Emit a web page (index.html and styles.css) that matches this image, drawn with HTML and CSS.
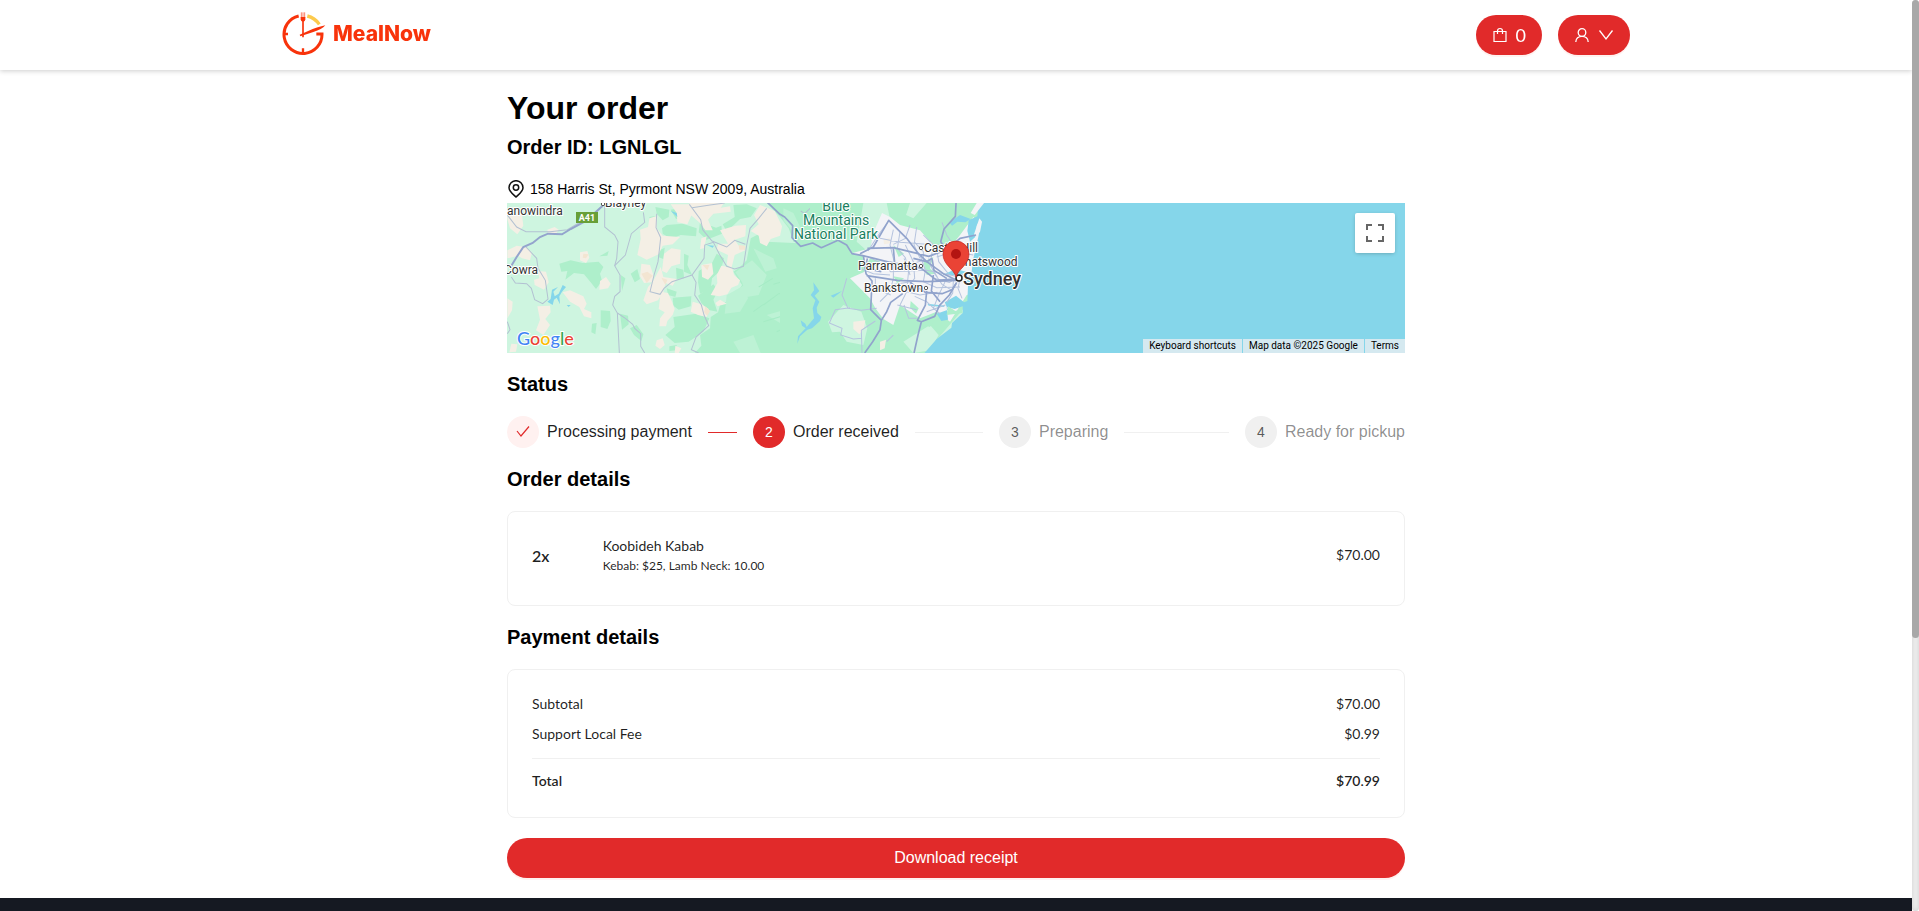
FILE: index.html
```html
<!DOCTYPE html>
<html lang="en">

	<head>
		<title>MealNow - Your order</title>
		<meta charset="utf-8">
		<meta name="viewport" content="width=device-width, initial-scale=1">
		<link rel="stylesheet" href="styles.css">
	</head>

	<body>
		<div class="page">
			<header class="header">
				<div class="header-inner">
					<a class="logo" href="#">
						<svg width="44" height="44" viewBox="0 0 132 132" fill="none" aria-hidden="true">
							<path d="M50 12A57 57 0 1 0 120 66H103" stroke="#f8330b" stroke-width="9"/>
							<path d="M76 12Q98 17 112 37" stroke="#fcca4d" stroke-width="10"/>
							<path d="M5 66H18M63 126V109" stroke="#f8330b" stroke-width="7"/>
							<path d="M58 1V18M63 1V18M68 1V18" stroke="#fb8068" stroke-width="3"/>
							<path d="M56 15H70V22Q70 29 63 29Q56 29 56 22Z" fill="#f8330b"/>
							<path d="M63 25V76" stroke="#f8330b" stroke-width="5"/>
							<path d="M53 68L92 51Q120 42 130 40Q120 52 94 60L55 73Z" fill="#f8330b"/>
						</svg>
						<span>MealNow</span>
					</a>
					<div class="actions">
						<button class="btn btn-cart" type="button" aria-label="Cart, 0 items">
							<svg width="16" height="16" viewBox="0 0 16 16" fill="none" stroke="#fff" stroke-width="1.200" aria-hidden="true">
								<path d="M2 4.500H14V14.500H2ZM5.500 7V4Q5.500 1.500 8 1.500T10.500 4V7"/>
							</svg>
							<span>0</span>
						</button>
						<button class="btn btn-user" type="button" aria-label="Account">
							<svg width="16" height="16" viewBox="0 0 16 16" fill="none" stroke="#fff" stroke-width="1.300" aria-hidden="true">
								<circle cx="8" cy="5.500" r="3.800"/>
								<path d="M1.800 15C1.800 11.500 4.500 9.300 8 9.300S14.200 11.500 14.200 15"/>
							</svg>
							<svg width="16" height="16" viewBox="0 0 16 16" fill="none" stroke="#fff" stroke-width="1.300" aria-hidden="true">
								<path d="M1.500 3.500L8 12L14.500 3.500"/>
							</svg>
						</button>
					</div>
				</div>
			</header>

			<main class="order">
				<h1>Your order</h1>
				<h2 class="order-id">Order ID: LGNLGL</h2>

				<div class="address">
					<svg width="18" height="18" viewBox="0 0 18 18" fill="none" stroke="#111" stroke-width="1.500" aria-hidden="true">
						<path d="M9 17C6.500 14.500 2 11.500 2 7.700A7 7 0 0 1 16 7.700C16 11.500 11.500 14.500 9 17Z"/>
						<circle cx="9" cy="7.500" r="2.700"/>
					</svg>
					<span>158 Harris St, Pyrmont NSW 2009, Australia</span>
				</div>

				<div class="map">
					<svg class="map-canvas" viewBox="0 0 898 150" preserveAspectRatio="xMidYMid slice" role="img" aria-label="Map of Sydney">
						<rect width="898" height="150" fill="#cef5e0"/>
						<!-- countryside, west -->
						<g transform="translate(-7 -8) scale(.3334)">
							<g fill="#aeefcb">
								<path d="M178 206L212 196L248 204L296 200L310 216L300 236L306 258L288 282L272 262L252 238L222 234L196 254L202 228L184 230Z"/>
								<path d="M302 346L330 348L332 378L322 402L302 396ZM360 356L384 362L386 388L366 404ZM276 386L290 384L286 418L274 412ZM298 184L326 168L322 182ZM362 240L376 250L366 288Z"/>
								<path d="M390 400L410 390L430 418L424 438L402 420ZM466 36L508 44L506 66L488 76L470 56ZM512 44L546 38L556 66L528 72ZM448 66L470 62L466 98L452 102Z"/>
								<path d="M500 90L548 86L590 100L588 124L542 120L514 132L488 116L486 100ZM600 80L648 98L664 92L666 116L620 134L596 112ZM474 168L494 158L490 192L474 186Z"/>
								<path d="M392 236L412 222L420 252L404 262ZM500 280L530 290L526 306L504 300ZM518 308L574 304L572 334L536 344L520 332ZM552 176L566 182L562 210L576 240L552 230ZM528 218L550 224L552 250L530 252Z"/>
								<path d="M520 366L588 356L628 370L610 410L566 440L524 444L496 420L524 396ZM596 228L636 204L650 176L672 190L662 226L636 250L632 282L600 296L594 262Z"/>
								<path d="M594 302L640 268L654 286L640 314L652 350L622 344L604 324ZM700 30L740 28L770 40L752 66L720 72L680 110L668 88L704 66ZM700 230L720 216L740 196L752 130L782 114L800 140L930 146V474H584L604 452L600 420L630 400L632 366L654 352L660 330L684 318L706 300L726 270Z"/>
								<path d="M800 24H930V150L880 140L866 100L840 66ZM508 454L530 450L528 466L508 468Z"/>
							</g>
							<g fill="#bdf2d5">
								<path d="M680 300L730 272L744 310L720 350L674 356ZM706 232L756 196L800 240L776 300L740 306L726 262ZM850 40L880 54L902 100L884 116L850 76ZM760 160L820 190L830 220L796 230ZM700 440L760 420L782 474H720ZM800 360L870 340L890 360L850 390Z"/>
							</g>
							<g stroke="#a5ebc5" stroke-width="3" fill="none">
								<path d="M790 330L836 296L880 290M820 268L884 250M856 226L900 214L924 190M790 380L850 362M830 410L880 386M760 350L790 328M880 330L926 310M776 276L818 250"/>
							</g>
							<g fill="#f4efe5">
								<path d="M22 42L42 36L66 60L70 92L52 118L30 100L22 72ZM22 166L50 152L76 156L96 172L90 196L66 190L54 182L22 190ZM142 104L164 96L176 104L168 116L144 114ZM240 172L262 168L268 188L258 204L240 196Z"/>
								<path d="M114 228L138 230L146 262L132 284L104 270L102 254L118 250ZM22 310L38 320L36 346L22 370ZM112 334L150 332L152 352L136 372L150 390L130 420L108 406L120 374ZM188 292L210 286L250 304L260 326L252 342L274 352L274 370L252 364L238 336L210 320ZM300 258L318 246L332 266L324 280L298 284Z"/>
								<path d="M448 70L472 62L470 100L488 122L540 126L518 148L488 152L476 178L440 194L412 180L422 132L420 104L444 96ZM512 28H568L580 48L562 88L532 82L530 54ZM492 176L514 160L542 164L540 206L514 214L500 234L486 228ZM424 206L450 210L462 246L456 262L432 264L420 244ZM482 216L490 246L530 252L518 272L496 264L490 292L474 316L440 328L430 316L444 276L458 260Z"/>
								<path d="M482 290L504 294L516 320L524 342L518 360L502 378L498 394L478 394L480 370L494 352L476 342ZM568 24H672L662 38L690 34L692 50L640 56L624 74L638 106L616 106L600 84L572 60ZM604 130L620 124L612 160L600 162ZM604 210L636 204L640 236L624 254L606 246ZM664 212L696 218L702 240L720 256L714 270L694 278L682 298L658 304L632 300L652 264L650 240Z"/>
								<path d="M660 106L706 92L738 90L736 124L704 134L716 152L736 166L704 180L694 220L680 208L684 180L650 164L654 146L684 146ZM780 30L824 48L846 94L840 122L812 132L800 154L780 144L776 122L752 108L776 88L762 60ZM646 324L660 314L680 326L652 334ZM578 320L604 328L626 342L620 366L594 360L572 350ZM470 436L488 430L494 450L480 462L466 452ZM526 452L544 460L536 474H524ZM34 446L52 448L48 470L28 472Z"/>
							</g>
							<g fill="#f3e5d2">
								<path d="M424 236L442 230L458 242L440 264ZM484 248L502 254L496 270ZM716 150L736 152L736 164L718 164ZM608 210L628 210L622 226ZM616 334L630 348L622 362L612 352ZM250 176L266 178L258 190L248 188Z"/>
							</g>
							<g fill="#85d6ea">
								<path d="M142 320L152 312L156 284L174 276L160 290L164 304L176 296L188 270L198 276L186 290L178 304L180 328L170 308L162 314L158 330ZM512 48L530 54L532 66ZM620 150L642 152L638 158ZM902 262L920 268L930 280V290L914 280ZM930 376L904 408L890 426L892 446L900 428L930 408ZM200 330H212L206 336Z"/>
							</g>
							<g fill="none" stroke="#b3c1d2" stroke-width="3">
								<path d="M22 60L50 96L78 110L150 110L202 104L236 84M78 156L110 190L114 220L136 256L144 312L128 326L104 314L94 280L80 266L46 264L34 246M314 30V96L344 120L354 140L350 190L344 212L360 240L360 290L344 304L338 330L352 354L358 474"/>
								<path d="M430 52L434 82L394 116L376 180L344 212M352 354L376 370L398 388L404 400L422 416V454L434 474M470 56L468 98L482 128L474 200L462 240L450 290L480 298L492 280L516 260L576 240L612 190L614 150L640 142L658 178L680 214L704 222L730 214L740 150L750 100L776 70L800 40"/>
								<path d="M568 28L602 74L608 104L636 138L680 156L704 136L736 148M576 240L588 262L584 300L604 330L612 360L626 392L588 426L574 464L596 474M576 38L630 30L674 24M902 48L914 56L930 40M22 380L30 404L22 416"/>
							</g>
							<path d="M34 212L50 186L70 156L98 144L120 126L144 116L186 118L212 102L260 76L308 32" fill="none" stroke="#94a4cd" stroke-width="6"/>
						</g>
						<!-- Sydney and the coast -->
						<g transform="translate(273 -8) scale(.3334)">
							<path d="M90 24H640V260L560 330L500 400L436 474H0V150L90 140Z" fill="#aeefcb"/>
							<path d="M250 24H320L330 72L280 130L264 170L230 140ZM144 380L190 330L244 350L262 400L250 450L200 440L180 410L156 412ZM390 24H440L400 70L378 60ZM370 440L450 390L476 420L450 466L400 474Z" fill="#cef5e0"/>
							<path d="M306 54L330 66L360 90L420 106L450 140L500 170L540 120L580 66L640 140V280L560 300L510 380L470 350L420 370L360 330L340 390L310 372L286 340L270 310L210 250L254 230L250 180L210 176L270 160L284 104Z" fill="#f3f4f7"/>
							<path d="M220 380L256 376L252 400L238 418L220 402ZM310 132L330 130L334 144L312 148ZM300 440L318 434L314 460L300 466Z" fill="#f4efe5"/>
							<path d="M430 200L460 186L450 220L466 236L440 240ZM340 150L372 176L356 186ZM270 190L300 198L290 214L262 204ZM340 244L372 250L352 266ZM392 318L416 340L408 356L390 338ZM420 380L462 386L448 396ZM448 116L484 82L508 106L488 150L452 146Z" fill="#aeefcb"/>
							<!-- ocean, harbour and rivers -->
							<path d="M610 20H1900V480H428L470 432L514 398L516 384L548 354V334L524 342L500 336L504 374L484 378L470 356L504 344L494 322L528 302L552 322L562 318L564 270L548 260L574 236L580 190L590 148L596 120L600 74L590 92L588 124L570 140L562 108L566 76L592 64L594 40Z" fill="#85d6ea"/>
							<path d="M504 334L526 348L546 342L548 354L500 360Z" fill="#aeefcb"/>
							<path d="M598 70L606 80L600 110L588 128L582 118ZM590 24H612L584 60L572 54Z" fill="#f3f4f7"/>
							<path d="M508 82L540 60L572 72L556 82L532 80L516 92ZM442 326L496 332L490 336L446 332ZM488 240L526 222L558 230L540 240ZM100 262L118 288L104 302L118 320L110 338L112 354L124 366L120 378L96 400L82 404L60 424L52 446L54 424L80 396L102 370L98 340L106 316L92 300L102 286ZM62 376L76 386L84 404L66 392ZM152 302L186 288L160 308Z" fill="#85d6ea"/>
							<g fill="none" stroke="#b5c3de" stroke-width="3">
								<path d="M326 78L302 110L282 140L264 168M340 104L330 150L344 206M360 110L352 160L376 188L390 240M410 96L402 150L420 190M300 130L360 142L440 148L508 154M262 184L304 206L332 230L440 226L528 244M256 200L240 220L280 236L330 240M286 250V280L332 300M340 206V250L330 290L300 320M372 190L386 224L380 290L360 330"/>
								<path d="M376 150L400 200L404 250L388 270M430 120L470 160L476 200L508 240M446 190L460 230L486 268L516 286M420 180L436 226L430 260L470 278L540 276M460 150L450 210L472 246M500 250L476 300L460 340L480 356M520 256L518 294L500 322M540 250L534 280L546 310M404 304L440 320L470 348M380 290L420 300L472 292M352 330L410 344M440 350L496 330M390 90L376 130L340 148"/>
								<path d="M200 250L186 300L204 340L244 346L290 340M286 378L244 406L246 474M210 338L166 344L148 384L186 400L182 420L220 432L246 430M372 330L386 370L410 370M320 440L340 420M296 110L270 130M486 82L500 120L520 150M470 186L520 170L580 180M456 248L508 262L548 238M404 142L430 170L430 200M330 200L384 210L430 196M256 280L330 270L392 260"/>
							</g>
							<g fill="none" stroke="#91a3cc" stroke-width="5" stroke-linejoin="round">
								<path d="M-40 20L0 58L14 66L38 92L36 128L62 154L98 144L124 158L174 136L200 150L216 176L248 182L282 190L344 206L402 214"/>
								<path d="M240 176L280 156L326 76L380 130L412 172L440 200L490 236L530 256M262 160L340 158L414 176L446 184L500 164L540 130L588 120M250 180L258 236L276 258L272 344L304 376L300 404L278 440L254 474M260 242L352 256L442 260L528 256M304 376L320 350L332 322L368 296M390 262L436 292L486 296L516 284L530 262"/>
								<path d="M528 24L526 64L492 102L482 140L500 166L520 200L532 248M440 288L436 330L412 376L424 380L414 420L402 474M424 380L464 364L478 332L508 300L528 266M262 190L256 220L304 230M456 190L462 226L500 250M400 190L440 200L456 190M402 214L424 220L470 256L520 252M344 206L340 160M460 240L454 288L480 320"/>
							</g>
						</g>
						<!-- labels -->
						<g class="map-labels">
							<text class="town" x="0" y="12">anowindra</text>
							<text class="town" x="98" y="4">Blayney</text>
							<text class="town" x="-3" y="71">Cowra</text>
							<text class="park" x="329" y="8" text-anchor="middle">Blue</text>
							<text class="park" x="329" y="22" text-anchor="middle">Mountains</text>
							<text class="park" x="329" y="36" text-anchor="middle">National Park</text>
							<text class="town" x="417" y="49">Castle Hill</text>
							<text class="town" x="450" y="63">Chatswood</text>
							<text class="town" x="351" y="67">Parramatta</text>
							<text class="town" x="357" y="89">Bankstown</text>
							<text class="city" x="456" y="82">Sydney</text>
							<g fill="#fff" stroke="#555">
								<circle cx="414" cy="45" r="1.700"/>
								<circle cx="414" cy="63" r="1.700"/>
								<circle cx="419" cy="85" r="1.700"/>
								<circle cx="96" cy="1" r="1.700"/>
								<circle cx="452" cy="75" r="3" stroke="#222" stroke-width="1.500"/>
							</g>
							<rect x="69" y="9" width="22" height="11" fill="#689f38"/>
							<text class="shield" x="80" y="18" text-anchor="middle">A41</text>
						</g>
						<path d="M449 74C447 66 436 62 436 51A13 13 0 0 1 462 51C462 62 451 66 449 74Z" fill="#ea4335" stroke="#c5221f" stroke-width=".7"/>
						<circle cx="449" cy="51" r="5" fill="#b31412"/>
					</svg>
					<div class="map-brand"><span class="g-blue">G</span><span class="g-red">o</span><span class="g-yellow">o</span><span class="g-blue">g</span><span class="g-green">l</span><span class="g-red">e</span></div>
					<button class="map-full" type="button" aria-label="Toggle fullscreen view">
						<svg width="18" height="18" viewBox="0 0 18 18" fill="none" stroke="#666" stroke-width="2" aria-hidden="true">
							<path d="M1 6V1H6M12 1H17V6M17 12V17H12M6 17H1V12"/>
						</svg>
					</button>
					<div class="map-legal">
						<button type="button">Keyboard shortcuts</button>
						<span>Map data ©2025 Google</span>
						<a href="#">Terms</a>
					</div>
				</div>

				<h2>Status</h2>
				<ol class="steps">
					<li class="step done">
						<span class="step-icon">
							<svg width="14" height="14" viewBox="0 0 14 14" fill="none" stroke="#e12a2a" stroke-width="1.200" aria-label="Done">
								<path d="M1 6L5 11L13 1.500"/>
							</svg>
						</span>
						<span class="step-title">Processing payment</span>
					</li>
					<li class="step active"><span class="step-icon">2</span><span class="step-title">Order received</span></li>
					<li class="step"><span class="step-icon">3</span><span class="step-title">Preparing</span></li>
					<li class="step"><span class="step-icon">4</span><span class="step-title">Ready for pickup</span></li>
				</ol>

				<h2>Order details</h2>
				<section class="card item">
					<span class="item-qty">2x</span>
					<div class="item-info">
						<p class="item-name">Koobideh Kabab</p>
						<p class="item-options">Kebab: $25, Lamb Neck: 10.00</p>
					</div>
					<span class="item-price">$70.00</span>
				</section>

				<h2>Payment details</h2>
				<section class="card">
					<dl class="sums">
						<div class="sum"><dt>Subtotal</dt><dd>$70.00</dd></div>
						<div class="sum"><dt>Support Local Fee</dt><dd>$0.99</dd></div>
						<div class="sum total"><dt>Total</dt><dd>$70.99</dd></div>
					</dl>
				</section>

				<button class="btn btn-receipt" type="button">Download receipt</button>
			</main>

			<footer class="footer"></footer>
		</div>
		<div class="scrollbar" aria-hidden="true"><div class="scrollbar-thumb"></div></div>
	</body>

</html>
```

FILE: styles.css
```css
* {
	box-sizing: border-box;
}

body {
	display: flex;
	height: 100vh;
	margin: 0;
	background: #fff;
	color: #000;
	font: 16px/24px "Liberation Sans", Arial, sans-serif;
}

h1,
h2,
p,
ol,
dl,
dd {
	margin: 0;
	padding: 0;
}

button {
	font-family: inherit;
	cursor: pointer;
}

.page {
	flex: 1;
	min-width: 0;
	overflow-y: auto;
	scrollbar-width: none;
}

.scrollbar {
	width: 7px;
	border-radius: 4px;
	background: #f0f0f0;
	box-shadow: inset 0 0 5px #ccc;
}

.scrollbar-thumb {
	height: 70%;
	border-radius: 4px;
	background: #a8a8a8;
}

/* header */
.header {
	position: sticky;
	top: 0;
	z-index: 10;
	height: 70px;
	padding: 0 24px;
	background: #fff;
	box-shadow: 0 1px 5px rgba(0, 0, 0, .2);
}

.header-inner {
	display: flex;
	align-items: center;
	justify-content: space-between;
	max-width: 1348px;
	height: 100%;
	margin: 0 auto;
}

.logo {
	display: flex;
	align-items: center;
	gap: 7px;
	margin-bottom: 3px;
	color: #f8330b;
	font: 800 21px/24px Inter, sans-serif;
	text-decoration: none;
}

.actions {
	display: flex;
	gap: 16px;
}

.btn {
	display: flex;
	align-items: center;
	justify-content: center;
	height: 40px;
	padding: 0 16px;
	border: 0;
	border-radius: 20px;
	background: #e12a2a;
	box-shadow: 0 2px 0 rgba(255, 38, 5, .06);
	color: #fff;
	font-size: 16px;
}

.btn-cart {
	gap: 8px;
	font-family: Lato, sans-serif;
	font-size: 18px;
}

.btn-user {
	gap: 8px;
}

/* order */
.order {
	display: flex;
	flex-direction: column;
	max-width: 898px;
	margin: 0 auto;
	padding: 16px 0 20px;
}

h1 {
	font-size: 32px;
	line-height: 44px;
}

h2 {
	margin: 16px 0;
	font-size: 20px;
	line-height: 31px;
}

.order-id {
	margin: 2px 0 16px;
}

.address {
	display: flex;
	align-items: center;
	gap: 5px;
	margin-bottom: 4px;
	font-size: 14px;
	line-height: 20px;
}

/* map */
.map {
	position: relative;
	height: 150px;
	overflow: hidden;
	background: #85d6ea;
}

.map-canvas {
	display: block;
	width: 100%;
	height: 100%;
}

.map-labels text {
	font-family: Roboto, sans-serif;
	paint-order: stroke;
	stroke: #fff;
	stroke-width: 2px;
	stroke-linejoin: round;
}

.map-labels .town {
	font-size: 12px;
	fill: #333;
}

.map-labels .park {
	font-size: 14px;
	fill: #188060;
}

.map-labels .city {
	font-size: 18px;
	font-weight: 500;
	fill: #333;
}

.map-labels .shield {
	font-size: 9px;
	font-weight: 700;
	fill: #fff;
	stroke: none;
}

.map-brand {
	position: absolute;
	left: 10px;
	bottom: 3px;
	font: 500 18px/24px Lato, sans-serif;
	-webkit-text-stroke: 2px #fff;
	paint-order: stroke;
}

.g-blue {
	color: #4285f4;
}

.g-red {
	color: #ea4335;
}

.g-yellow {
	color: #fbbc04;
}

.g-green {
	color: #34a853;
}

.map-full {
	position: absolute;
	top: 10px;
	right: 10px;
	display: flex;
	align-items: center;
	justify-content: center;
	width: 40px;
	height: 40px;
	padding: 0;
	border: 0;
	border-radius: 2px;
	background: #fff;
	box-shadow: 0 1px 4px -1px rgba(0, 0, 0, .3);
}

.map-legal {
	position: absolute;
	right: 0;
	bottom: 0;
	display: flex;
	gap: 1px;
	font: 10px/14px Roboto, sans-serif;
}

.map-legal > * {
	padding: 0 6px;
	border: 0;
	background: #d5e9f0;
	color: #000;
	font: inherit;
	text-decoration: none;
}

/* status */
.steps {
	display: flex;
	gap: 16px;
	list-style: none;
}

.step {
	display: flex;
	flex: 1;
	align-items: center;
	color: rgba(0, 0, 0, .45);
	white-space: nowrap;
}

.step:last-child {
	flex: none;
}

.step:not(:last-child)::after {
	content: '';
	flex: 1;
	height: 1px;
	margin-left: 16px;
	background: #f0f0f0;
}

.step-icon {
	display: flex;
	align-items: center;
	justify-content: center;
	width: 32px;
	height: 32px;
	margin-right: 8px;
	border-radius: 50%;
	background: #f0f0f0;
	color: rgba(0, 0, 0, .65);
	font-size: 14px;
}

.done,
.active {
	color: rgba(0, 0, 0, .88);
}

.done .step-icon {
	background: #fff1f0;
}

.step.done:not(:last-child)::after {
	background: #e12a2a;
}

.active .step-icon {
	background: #e12a2a;
	color: #fff;
}

/* cards */
.card {
	padding: 24px 24px 26px;
	border: 1px solid #f0f0f0;
	border-radius: 8px;
	color: rgba(0, 0, 0, .88);
	font: 14px/20px Lato, sans-serif;
}

.item {
	display: grid;
	grid-template-columns: 1fr 10fr 1fr;
	padding-bottom: 29px;
}

.item-qty {
	font-size: 16px;
	font-weight: 600;
	line-height: 40px;
}

.item-options {
	font-size: 12px;
}

.item-price {
	line-height: 38px;
	text-align: right;
}

.sum {
	display: flex;
	justify-content: space-between;
	margin-bottom: 10px;
}

.total {
	margin: 14px 0 0;
	padding-top: 12px;
	border-top: 1px solid #f0f0f0;
	font-weight: 600;
}

.btn-receipt {
	width: 100%;
	margin-top: 20px;
}

.footer {
	height: 401px;
	background: #151922;
}
```
